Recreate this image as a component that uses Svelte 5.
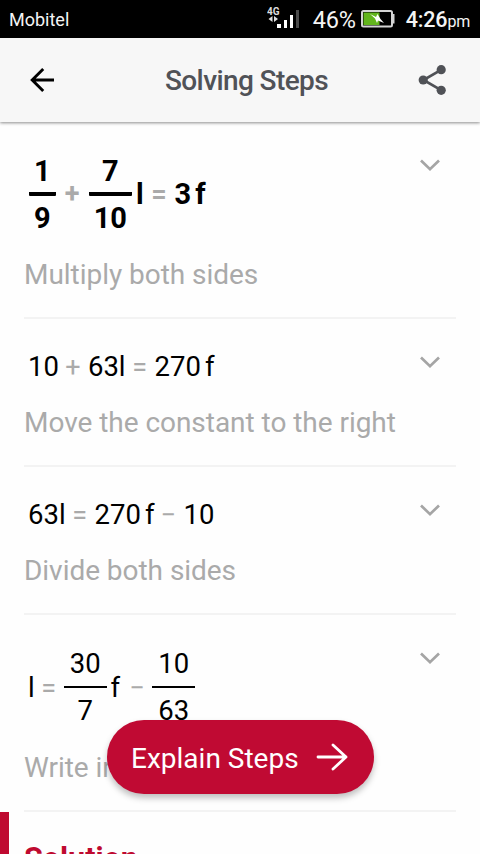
<script>
  const steps = [
    {
      bold: true,
      tokens: [
        { frac: ["1", "9"] },
        { op: "+" },
        { frac: ["7", "10"] },
        { name: "l" },
        { op: "=" },
        { num: "3" },
        { name: "f" },
      ],
      text: "Multiply both sides",
    },
    {
      tokens: [
        { num: "10" },
        { op: "+" },
        { num: "63" },
        { name: "l" },
        { op: "=" },
        { num: "270" },
        { name: "f" },
      ],
      text: "Move the constant to the right",
    },
    {
      tokens: [
        { num: "63" },
        { name: "l" },
        { op: "=" },
        { num: "270" },
        { name: "f" },
        { op: "−" },
        { num: "10" },
      ],
      text: "Divide both sides",
    },
    {
      tokens: [
        { name: "l" },
        { op: "=" },
        { frac: ["30", "7"] },
        { name: "f" },
        { op: "−" },
        { frac: ["10", "63"] },
      ],
      text: "Write in",
    },
  ];

  let opened = $state(-1);
</script>

<div class="screen">
  <div class="status">
    <span class="carrier">Mobitel</span>
    <svg class="signal" width="34" height="28" viewBox="0 0 34 28">
      <text x="0" y="9.500" font-size="10" font-weight="700" fill="#ddd">4G</text>
      <path d="M5.500 11v6l-4-3zM7 11v6l4-3z" fill="#ddd" />
      <path d="M10 19h4v4h-4zM17 15h3v8h-3zM23 10h3v13h-3z" fill="#fff" />
      <path d="M29 5h3v18h-3z" fill="#4a4a4a" />
    </svg>
    <span class="percent">46%</span>
    <svg class="battery" width="34" height="18" viewBox="0 0 34 18">
      <rect x="1" y="1" width="30" height="15.500" rx="1.500" fill="none" stroke="#d4d4d4" stroke-width="2" />
      <path d="M31 4h2.500v9.500H31" fill="#d4d4d4" />
      <path d="M2.500 2.500h16v12.500h-16z" fill="#62b51c" />
      <path d="M9 4l6 3 1.500-3 3 5 3.500 4-6-2.500-1 2.500-2-4.500z" fill="#fff" />
    </svg>
    <span class="time">4:26<small>pm</small></span>
  </div>

  <header>
    <button class="icon" aria-label="Back">
      <svg width="26" height="26" viewBox="0 0 26 26" fill="none" stroke="#000" stroke-width="2.900">
        <path d="M15.200 2L4.200 13l11 11M4.200 13H26" />
      </svg>
    </button>
    <h1>Solving Steps</h1>
    <button class="icon" aria-label="Share">
      <svg width="30" height="32" viewBox="0 0 30 32" fill="#505257">
        <path d="M23.500 5.700L5.500 16l18 10.300" fill="none" stroke="#505257" stroke-width="2.700" />
        <circle cx="23.200" cy="5.700" r="4.600" />
        <circle cx="5.200" cy="16" r="4.600" />
        <circle cx="23.200" cy="26.300" r="4.600" />
      </svg>
    </button>
  </header>

  <main>
    {#each steps as step, i}
      <section class="step">
        <div class="equation" class:bold={step.bold}>
          {#each step.tokens as token}
            {#if token.frac}
              <span class="frac">
                <span class="top">{token.frac[0]}</span>
                <span class="bottom">{token.frac[1]}</span>
              </span>
            {:else if token.op}
              <span class="op">{token.op}</span>
            {:else if token.name}
              <span class="name {token.name}">{token.name}</span>
            {:else}
              <span class="num">{token.num}</span>
            {/if}
          {/each}
        </div>
        <p>{step.text}</p>
        <button class="chevron" aria-label="Expand step" onclick={() => (opened = opened === i ? -1 : i)}>
          <svg width="22" height="14" viewBox="0 0 22 14" fill="none" stroke="#a5a5a5" stroke-width="2.700">
            <path d="M2 1.500l9 8.700 9-8.700" />
          </svg>
        </button>
      </section>
    {/each}
    <section class="solution">
      <h2>Solution</h2>
    </section>
  </main>

  <button class="explain">
    <span>Explain Steps</span>
    <svg width="32" height="30" viewBox="0 0 32 30" fill="none" stroke="#fff" stroke-width="2.800" stroke-linecap="round" stroke-linejoin="round">
      <path d="M2 15h28M17 3l13 12-13 12" />
    </svg>
  </button>
</div>

<style>
  :global(body) {
    margin: 0;
    background: #fefefe;
  }

  .screen {
    position: relative;
    width: 480px;
    height: 854px;
    overflow: hidden;
    display: flex;
    flex-direction: column;
    background: #fefefe;
    font-family: Roboto, "Liberation Sans", sans-serif;
  }

  button {
    border: none;
    background: none;
    padding: 0;
    font-family: inherit;
    cursor: pointer;
  }

  svg {
    display: block;
  }

  .status {
    flex: none;
    display: flex;
    align-items: center;
    box-sizing: border-box;
    height: 38px;
    padding: 0 10px 0 9px;
    background: #000;
    color: #f4f4f4;
  }

  .carrier {
    font-size: 18px;
    margin-right: auto;
    padding-top: 1px;
  }

  .signal {
    margin: 0 12px 0 0;
  }

  .percent {
    font-size: 23.500px;
    letter-spacing: -0.2px;
    padding-top: 1px;
  }

  .battery {
    margin: 0 11px 0 5px;
  }

  .time {
    font-size: 21.500px;
    font-weight: 500;
    letter-spacing: -0.2px;
    padding-top: 1px;
  }

  .time small {
    font-size: 16px;
    font-weight: 400;
  }

  header {
    flex: none;
    position: relative;
    display: flex;
    align-items: center;
    justify-content: space-between;
    box-sizing: border-box;
    height: 84px;
    padding: 0 32px 0 28px;
    background: #f7f7f7;
    box-shadow: 0 1px 3px rgba(0, 0, 0, 0.45);
  }

  h1 {
    margin: 0 0 0 21px;
    color: #505257;
    font-size: 28px;
    font-weight: 500;
    letter-spacing: -0.6px;
  }

  main {
    padding: 0 24px;
  }

  .step {
    position: relative;
    padding: 25px 0 22px;
    border-bottom: 2px solid #f3f3f3;
  }

  .equation {
    display: flex;
    align-items: center;
    padding-left: 4px;
    color: #000;
    font-size: 27.500px;
    line-height: 46px;
  }

  .op {
    display: flex;
    justify-content: center;
    width: 14px;
    margin: 0 8px 0 7px;
    color: #aaa;
    font-size: 27px;
  }

  .name.f {
    margin: 0 0 0 4px;
  }

  .frac {
    display: flex;
    flex-direction: column;
    text-align: center;
    line-height: 48px;
  }

  .frac + .name.f {
    margin-right: 3px;
  }

  .frac .top {
    height: 46px;
    padding: 0 6px;
    border-bottom: 2px solid #000;
  }

  .frac .bottom {
    height: 47px;
    padding: 0 6px;
    line-height: 46px;
  }

  .bold {
    font-size: 29px;
    font-weight: 700;
  }

  .bold .op {
    margin: 0 8.500px;
  }

  .bold .num,
  .bold .name,
  .bold .op {
    padding-bottom: 2px;
  }

  .bold .frac {
    margin: 0 1px;
  }

  .bold .frac .top {
    height: 45px;
    padding: 0 5px;
    border-bottom-width: 4px;
    border-radius: 1px;
  }

  .bold .frac .bottom {
    height: 46px;
    padding: 0 5px;
    line-height: 44px;
  }

  .bold .frac + .name {
    margin-left: 3px;
  }

  p {
    margin: 12px 0 0;
    color: #aaa;
    font-size: 28px;
    letter-spacing: -0.040px;
    line-height: 41px;
    white-space: nowrap;
  }

  .chevron {
    position: absolute;
    top: 37px;
    right: 15px;
  }

  .solution {
    margin: 0 -24px;
    padding: 27px 11px;
    border-left: 9px solid #bf0a30;
  }

  h2 {
    margin: 0 4px;
    color: #bf0a30;
    font-size: 30.500px;
    line-height: 40px;
  }

  .explain {
    position: absolute;
    left: 107px;
    top: 720px;
    display: flex;
    align-items: center;
    gap: 17px;
    width: 267px;
    height: 74px;
    padding-left: 24px;
    border-radius: 37px;
    background: #c00a33;
    color: #fff;
    font-size: 28px;
    box-shadow: 0 4px 6px rgba(0, 0, 0, 0.25);
    white-space: nowrap;
  }

  .explain span {
    padding-top: 3px;
  }
</style>
